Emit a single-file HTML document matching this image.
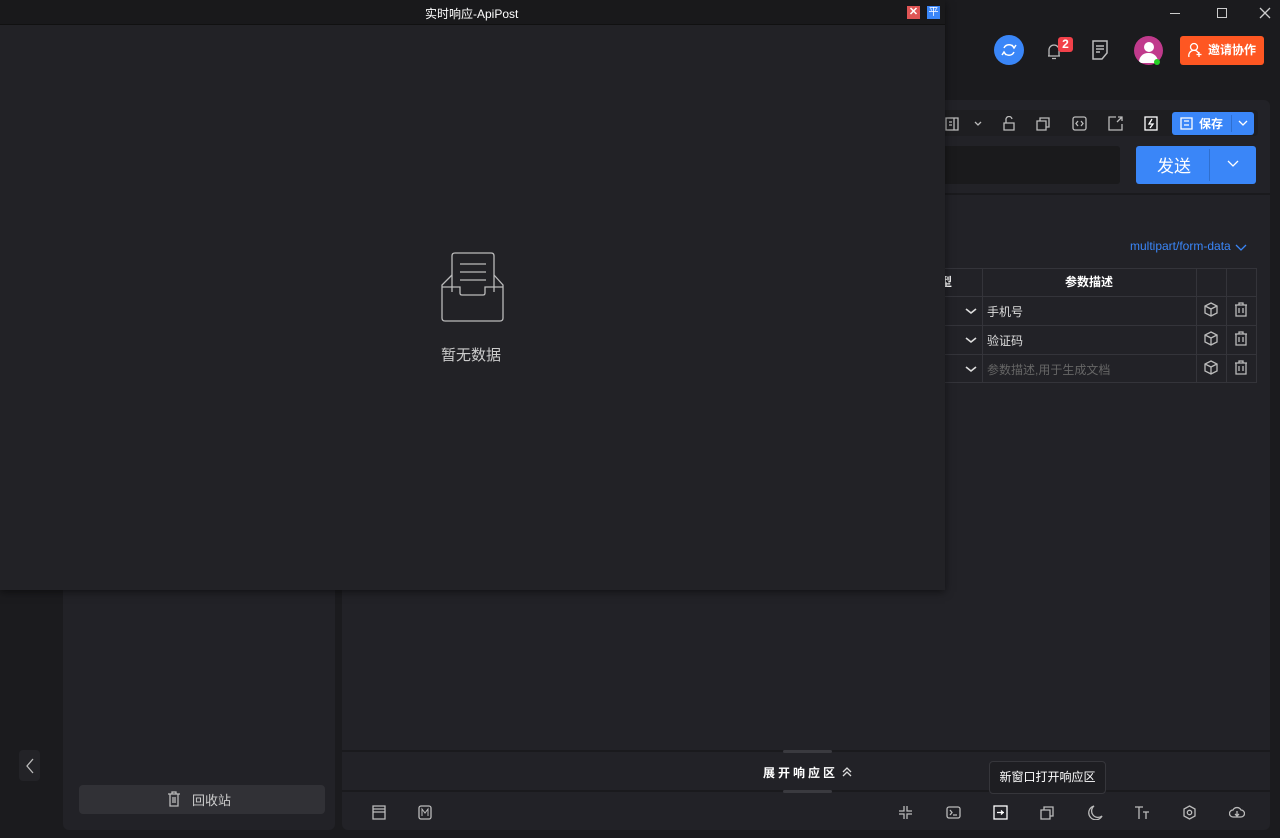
<!DOCTYPE html>
<html><head><meta charset="utf-8">
<style>
*{margin:0;padding:0;box-sizing:border-box}
body{width:1280px;height:838px;background:#1b1b1e;position:relative;overflow:hidden;font-family:"Liberation Sans","Noto Sans CJK SC",sans-serif;color:#ddd}
.a{position:absolute}
svg{position:absolute;fill:none;stroke:#bbb;stroke-width:1.3}
.cell{position:absolute;border:1px solid #34343a}
</style></head><body>
<div class="a" style="left:63px;top:560px;width:272px;height:270px;background:#222227;border-radius:0 0 6px 6px"></div>
<div class="a" style="left:342px;top:100px;width:928px;height:730px;background:#222227;border-radius:6px"></div>
<div class="a" style="left:342px;top:193px;width:928px;height:2px;background:#1a1a1d"></div>
<div class="a" style="left:19px;top:750px;width:21px;height:31px;background:#232327;border-radius:4px"></div>
<svg style="left:23px;top:757px" width="14" height="18"><path d="M10 2 L4 9 L10 16"/></svg>
<div class="a" style="left:79px;top:785px;width:246px;height:29px;background:#313136;border-radius:4px"></div>
<svg style="left:167px;top:791px" width="14" height="16"><path d="M1 3H13M5 3V1H9V3M3 3V15H11V3M6 6V12M8 6V12"/></svg>
<div class="a" style="left:192px;top:790px;font-size:13px;color:#ccc">回收站</div>
<div class="a" style="left:1170px;top:13px;width:10px;height:1px;background:#ccc"></div>
<div class="a" style="left:1217px;top:8px;width:10px;height:10px;border:1px solid #ccc"></div>
<svg style="left:1259px;top:7px" width="12" height="12"><path d="M1 1L11 11M11 1L1 11" stroke="#ccc"/></svg>
<div class="a" style="left:994px;top:35px;width:30px;height:30px;border-radius:50%;background:#3a86f8"></div>
<svg style="left:1001px;top:42px" width="16" height="16"><path d="M3 6A5.5 5.5 0 0 1 13 6M13 10A5.5 5.5 0 0 1 3 10M11 3l2 3l2-3M1 13l2-3l2 3" stroke="#fff" stroke-width="1.5"/></svg>
<svg style="left:1046px;top:41px" width="16" height="20"><path d="M2 15H14M3 15V9A5 5 0 0 1 13 9V15M6 17.5H10" stroke="#bbb"/></svg>
<div class="a" style="left:1058px;top:37px;width:15px;height:15px;border-radius:3px;background:#f2414a;color:#fff;font-size:12px;font-weight:bold;text-align:center;line-height:15px">2</div>
<svg style="left:1091px;top:40px" width="18" height="20"><path d="M2 1H16V13L11 19H2ZM5 6H13M5 9H13M5 12H9" stroke="#bbb" stroke-width="1.5"/></svg>
<div class="a" style="left:1134px;top:36px;width:29px;height:29px;border-radius:50%;background:#c03a8c;overflow:hidden"><div class="a" style="left:10px;top:6px;width:10px;height:10px;border-radius:50%;background:#fff"></div><div class="a" style="left:5px;top:17px;width:19px;height:10px;border-radius:9px 9px 0 0;background:#fff"></div></div>
<div class="a" style="left:1154px;top:59px;width:6px;height:6px;border-radius:50%;background:#26d126"></div>
<div class="a" style="left:1180px;top:36px;width:84px;height:29px;background:#fe5722;border-radius:3px;color:#fff;font-size:12px;font-weight:bold;line-height:29px;padding-left:28px">邀请协作</div>
<svg style="left:1188px;top:42px" width="14" height="16"><circle cx="6" cy="5" r="3.5" stroke="#fff"/><path d="M1 15A5 5 0 0 1 11 12M11 10V15M8.5 12.5H13.5" stroke="#fff"/></svg>
<div class="a" style="left:940px;top:110px;width:318px;height:26px;background:#1e1e21;border-radius:4px"></div>
<svg style="left:945px;top:117px" width="40" height="14"><path d="M1 1H13V13H1ZM9 1V13M4 5H7M4 8H7M30 5L33 8L36 5"/></svg>
<svg style="left:1002px;top:116px" width="14" height="15"><path d="M2 7H12V14H2ZM4 7V4A3 3 0 0 1 10 3"/></svg>
<svg style="left:1036px;top:116px" width="15" height="15"><path d="M1 5H10V14H1ZM4 5V2H13V11H10"/></svg>
<svg style="left:1072px;top:116px" width="15" height="15"><rect x="1" y="1" width="13" height="13" rx="2"/><path d="M6 5L4 7.5L6 10M9 5L11 7.5L9 10"/></svg>
<svg style="left:1108px;top:116px" width="15" height="15"><path d="M8 1H1V14H14V8M9 6L14 1M10 1H14V5"/></svg>
<svg style="left:1144px;top:116px" width="14" height="15"><rect x="1" y="1" width="12" height="13" stroke="#fff"/><path d="M8 3L5 8H9L6 12" stroke="#fff"/></svg>
<div class="a" style="left:1172px;top:112px;width:82px;height:23px;background:#3a86f8;border-radius:3px"></div>
<div class="a" style="left:1231px;top:115px;width:1px;height:17px;background:#2f6fcf"></div>
<svg style="left:1180px;top:117px" width="13" height="13"><path d="M1 1H12V12H1ZM4 4H9M4 8H9" stroke="#fff"/></svg>
<div class="a" style="left:1199px;top:115px;font-size:12px;font-weight:bold;color:#fff">保存</div>
<svg style="left:1237px;top:119px" width="12" height="8"><path d="M2 2L6 6L10 2" stroke="#fff"/></svg>
<div class="a" style="left:940px;top:146px;width:180px;height:38px;background:#1a1a1c;border-radius:3px"></div>
<div class="a" style="left:1136px;top:146px;width:120px;height:38px;background:#3a86f8;border-radius:3px"></div>
<div class="a" style="left:1209px;top:149px;width:1px;height:32px;background:#2f6fcf"></div>
<div class="a" style="left:1157px;top:152px;font-size:17px;color:#fff">发送</div>
<svg style="left:1226px;top:159px" width="14" height="10"><path d="M2 2L7 7L12 2" stroke="#fff"/></svg>
<div class="a" style="left:1130px;top:239px;font-size:12px;color:#3a86f8">multipart/form-data</div>
<svg style="left:1234px;top:243px" width="14" height="10"><path d="M2 2L7 7L12 2" stroke="#3a86f8"/></svg>
<div class="cell" style="left:930px;top:268px;width:327px;height:115px"></div>
<div class="a" style="left:930px;top:296px;width:327px;height:1px;background:#34343a"></div>
<div class="a" style="left:930px;top:325px;width:327px;height:1px;background:#34343a"></div>
<div class="a" style="left:930px;top:354px;width:327px;height:1px;background:#34343a"></div>
<div class="a" style="left:982px;top:268px;width:1px;height:115px;background:#34343a"></div>
<div class="a" style="left:1196px;top:268px;width:1px;height:115px;background:#34343a"></div>
<div class="a" style="left:1226px;top:268px;width:1px;height:115px;background:#34343a"></div>
<div class="a" style="left:1065px;top:273px;font-size:12px;font-weight:bold;color:#fff">参数描述</div>
<div class="a" style="left:940px;top:273px;font-size:12px;font-weight:bold;color:#fff">型</div>
<div class="a" style="left:987px;top:303px;font-size:12px;color:#ddd">手机号</div>
<div class="a" style="left:987px;top:332px;font-size:12px;color:#ddd">验证码</div>
<div class="a" style="left:987px;top:361px;font-size:12px;color:#666">参数描述,用于生成文档</div>
<svg style="left:964px;top:300px" width="14" height="80"><path d="M2 9L7 13L12 9M2 38L7 42L12 38M2 67L7 71L12 67" stroke="#ddd" stroke-width="1.6"/></svg>
<svg style="left:1204px;top:302px" width="16" height="76" stroke="#777"><path d="M7 1L13 4V11L7 14L1 11V4ZM1 4L7 7L13 4M7 7V14M7 30L13 33V40L7 43L1 40V33ZM1 33L7 36L13 33M7 36V43M7 59L13 62V69L7 72L1 69V62ZM1 62L7 65L13 62M7 65V72"/></svg>
<svg style="left:1234px;top:302px" width="14" height="76" stroke="#777"><path d="M1 3H13M5 3V1H9V3M2 3V14H12V3M5 6V11M9 6V11M1 32H13M5 32V30H9V32M2 32V43H12V32M5 35V40M9 35V40M1 61H13M5 61V59H9V61M2 61V72H12V61M5 64V69M9 64V69"/></svg>
<div class="a" style="left:342px;top:750px;width:928px;height:2px;background:#1a1a1d"></div>
<div class="a" style="left:342px;top:790px;width:928px;height:2px;background:#1a1a1d"></div>
<div class="a" style="left:783px;top:750px;width:49px;height:3px;background:#3a3a3f;border-radius:2px"></div>
<div class="a" style="left:783px;top:790px;width:49px;height:3px;background:#3a3a3f;border-radius:2px"></div>
<div class="a" style="left:763px;top:764px;font-size:12px;font-weight:bold;color:#fff;letter-spacing:3px">展开响应区</div>
<svg style="left:841px;top:766px" width="12" height="12"><path d="M2 6L6 2L10 6M2 10L6 6L10 10" stroke="#ddd"/></svg>
<div class="a" style="left:989px;top:761px;width:117px;height:33px;background:#1e1e22;border:1px solid #36363b;border-radius:4px;font-size:12px;color:#fff;line-height:31px;text-align:center">新窗口打开响应区</div>
<svg style="left:372px;top:805px" width="14" height="15"><path d="M1 1H13V14H1ZM1 4H13M1 7H13"/></svg>
<svg style="left:418px;top:805px" width="14" height="15"><rect x="1" y="1" width="12" height="13" rx="2"/><path d="M4 11V4L7 8L10 4V11" stroke-width="1"/></svg>
<svg style="left:898px;top:805px" width="15" height="15"><path d="M6 1V6H1M9 1V6H14M6 14V9H1M9 14V9H14"/></svg>
<svg style="left:946px;top:805px" width="15" height="15"><rect x="1" y="2" width="13" height="11" rx="2"/><path d="M4 5L6 7.5L4 10M7 10H11"/></svg>
<svg style="left:993px;top:805px" width="15" height="15"><rect x="1" y="1" width="13" height="13" stroke="#fff"/><path d="M4 7.5H11M8 5.5L10 7.5L8 9.5" stroke="#fff"/></svg>
<svg style="left:1040px;top:805px" width="15" height="15"><path d="M1 5H10V14H1ZM4 5V2H13V11H10"/></svg>
<svg style="left:1088px;top:805px" width="15" height="15"><path d="M6 1A7 7 0 1 0 14 11A6 6 0 0 1 6 1Z"/></svg>
<svg style="left:1134px;top:805px" width="16" height="15"><path d="M1 2H9M5 2V14M9 7H15M12 7V14"/></svg>
<svg style="left:1182px;top:805px" width="15" height="15"><path d="M7.5 1L13 4V11L7.5 14L2 11V4Z"/><circle cx="7.5" cy="7.5" r="2.2"/></svg>
<svg style="left:1229px;top:805px" width="16" height="15"><path d="M4 12A3.5 3.5 0 0 1 4 5A4.5 4.5 0 0 1 12 5A3.5 3.5 0 0 1 12 12ZM8 6V11M6 9L8 11L10 9"/></svg>
<div class="a" style="left:0;top:0;width:945px;height:590px;background:#222226;box-shadow:0 2px 8px rgba(0,0,0,.5)"></div>
<div class="a" style="left:0;top:0;width:945px;height:25px;background:#19191b;border-bottom:1px solid #111"></div>
<div class="a" style="left:425px;top:5px;font-size:12px;color:#fff">实时响应-ApiPost</div>
<div class="a" style="left:907px;top:6px;width:13px;height:13px;background:#e05555;color:#fff;font-size:11px;font-weight:bold;text-align:center;line-height:13px">✕</div>
<div class="a" style="left:927px;top:6px;width:13px;height:13px;background:#3a86f8;color:#fff;font-size:10px;text-align:center;line-height:13px">平</div>
<svg style="left:441px;top:252px" width="64" height="72" stroke="#6a6a70" stroke-width="1"><path d="M11 40V4Q11 1 14 1H50Q53 1 53 4V40"/><path d="M19 12H45M19 20H45M19 28H45"/><path d="M11 23L1 33V66Q1 69 4 69H59Q62 69 62 66V33L53 23"/><path d="M1 35H19V41Q19 43 21 43H42Q44 43 44 41V35H62"/></svg>
<div class="a" style="left:441px;top:344px;font-size:15px;color:#ccc">暂无数据</div>
</body></html>
